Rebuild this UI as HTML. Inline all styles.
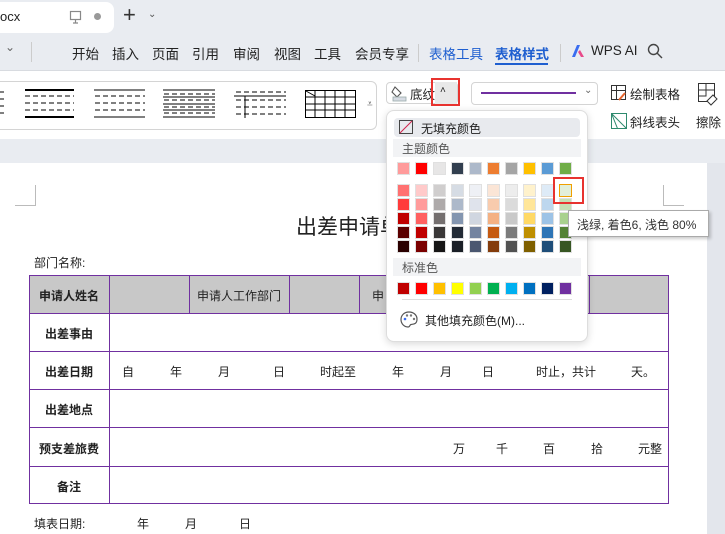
<!DOCTYPE html>
<html><head><meta charset="utf-8"><style>
*{box-sizing:border-box;margin:0;padding:0}
body{width:725px;height:534px;overflow:hidden;position:relative;background:#e9ecf1;font-family:"Liberation Sans","Noto Sans CJK SC",sans-serif;color:#222}
.a{position:absolute}
.t{position:absolute;white-space:nowrap;font-size:13px}
.menu .t{top:43px;font-size:13.5px}
.sw{position:absolute;width:13px;height:13px;border:1px solid #e0e0e0}
table{border-collapse:collapse}
</style></head><body>
<!-- tab bar -->
<div class="a" style="left:-10px;top:2px;width:124px;height:31px;background:#fff;border-radius:8px"></div>
<div class="t" style="left:0;top:9px;font-size:13px">ocx</div>
<svg class="a" style="left:69px;top:10px" width="14" height="14"><rect x="1.5" y="1.5" width="10" height="8" fill="none" stroke="#888" stroke-width="1.2"/><path d="M6.5 10v3M4 13h5" stroke="#888" stroke-width="1.2"/></svg>
<div class="a" style="left:94px;top:13px;width:7px;height:7px;border-radius:50%;background:#999"></div>
<div class="t" style="left:123px;top:2px;font-size:22px;color:#333">+</div>
<div class="t" style="left:148px;top:9px;font-size:10px;color:#555">⌄</div>
<!-- menu -->
<div class="menu">
<div class="t" style="left:5px;top:40px;color:#666;font-size:12px">⌄</div>
<div class="a" style="left:31px;top:42px;width:1px;height:20px;background:#ccc"></div>
<div class="t" style="left:72px">开始</div><div class="t" style="left:112px">插入</div><div class="t" style="left:152px">页面</div><div class="t" style="left:192px">引用</div><div class="t" style="left:233px">审阅</div><div class="t" style="left:274px">视图</div><div class="t" style="left:314px">工具</div><div class="t" style="left:355px">会员专享</div>
<div class="a" style="left:418px;top:44px;width:1px;height:18px;background:#ccc"></div>
<div class="t" style="left:429px;color:#1f5fd0">表格工具</div>
<div class="t" style="left:495px;color:#1f5fd0;font-weight:bold">表格样式</div>
<div class="a" style="left:495px;top:63px;width:53px;height:2px;background:#1f5fd0"></div>
<div class="a" style="left:560px;top:44px;width:1px;height:18px;background:#ccc"></div>
<svg class="a" style="left:571px;top:44px" width="14" height="14"><path d="M1 13L6 1h3L4 13z" fill="#3a6df0"/><path d="M7 8l3 5h3l-4-7z" fill="#e84a8a"/></svg>
<div class="t" style="left:591px;top:43px">WPS AI</div>
<svg class="a" style="left:647px;top:43px" width="16" height="16"><circle cx="6.5" cy="6.5" r="5" fill="none" stroke="#444" stroke-width="1.4"/><path d="M10 10l5 5" stroke="#444" stroke-width="1.4"/></svg>
</div>
<!-- ribbon -->
<div class="a" style="left:0;top:70px;width:725px;height:69px;background:#fff;border-top:1px solid #d8dbe0"></div>
<div class="a" style="left:-10px;top:81px;width:387px;height:49px;border:1px solid #d4d4d4;border-radius:6px;background:#fff"></div>
<svg class="a" style="left:0;top:88px" width="360" height="34">
<g stroke="#000" stroke-width="1" stroke-dasharray="5,3">
<line x1="0" y1="4" x2="4" y2="4"/><line x1="0" y1="11" x2="4" y2="11"/><line x1="0" y1="18" x2="4" y2="18"/><line x1="0" y1="25" x2="4" y2="25"/>
<line x1="25" y1="8" x2="74" y2="8"/><line x1="25" y1="15" x2="74" y2="15"/><line x1="25" y1="22" x2="74" y2="22"/>
<line x1="95" y1="8" x2="145" y2="8"/><line x1="95" y1="15" x2="145" y2="15"/><line x1="95" y1="22" x2="145" y2="22"/>
<line x1="164" y1="6" x2="215" y2="6"/><line x1="164" y1="12" x2="215" y2="12"/><line x1="164" y1="19" x2="215" y2="19"/><line x1="164" y1="25" x2="215" y2="25"/>
<line x1="236" y1="4" x2="286" y2="4"/><line x1="236" y1="12" x2="286" y2="12"/><line x1="236" y1="19" x2="286" y2="19"/><line x1="236" y1="26" x2="286" y2="26"/>
</g>
<g stroke="#000">
<line x1="25" y1="2" x2="74" y2="2" stroke-width="2"/><line x1="25" y1="29" x2="74" y2="29" stroke-width="2"/>
<line x1="94" y1="2" x2="145" y2="2"/><line x1="94" y1="29" x2="145" y2="29"/>
<line x1="163" y1="2" x2="215" y2="2"/><line x1="163" y1="9" x2="215" y2="9"/><line x1="163" y1="16" x2="215" y2="16"/><line x1="163" y1="22" x2="215" y2="22"/><line x1="163" y1="29" x2="215" y2="29"/>
<line x1="234" y1="8" x2="286" y2="8"/><line x1="245" y1="8" x2="245" y2="30"/>
<rect x="305.5" y="2.5" width="50" height="27" fill="none"/>
<line x1="305" y1="9" x2="356" y2="9"/><line x1="305" y1="16" x2="356" y2="16"/><line x1="305" y1="22" x2="356" y2="22"/>
<line x1="315" y1="2" x2="315" y2="30"/><line x1="325" y1="2" x2="325" y2="30"/><line x1="335" y1="2" x2="335" y2="30"/><line x1="345" y1="2" x2="345" y2="30"/>
<line x1="306" y1="3" x2="315" y2="8"/>
</g></svg>
<div class="t" style="left:367px;top:99px;font-size:10px;color:#555">⩡</div>
<div class="a" style="left:386px;top:82px;width:72px;height:22px;border:1px solid #d4d4d4;border-radius:4px"></div>
<svg class="a" style="left:391px;top:84px" width="18" height="18"><path d="M4 3l6 6-4 4-5-5z" fill="none" stroke="#555" stroke-width="1.1"/><rect x="2" y="13" width="13" height="4" fill="#d6dbe3" stroke="#9aa" stroke-width=".8"/></svg>
<div class="t" style="left:410px;top:84px;font-size:12.5px">底纹</div>
<div class="a" style="left:435px;top:82px;width:22px;height:22px;background:#e8e8e8"></div>
<div class="t" style="left:440px;top:85px;font-size:10px">˄</div>
<div class="a" style="left:431px;top:78px;width:29px;height:28px;border:2px solid #e8332f"></div>
<div class="a" style="left:471px;top:82px;width:127px;height:23px;border:1px solid #d4d4d4;border-radius:4px"></div>
<div class="a" style="left:481px;top:92px;width:95px;height:1.5px;background:#7030a0"></div>
<div class="t" style="left:584px;top:85px;font-size:10px;color:#666">⌄</div>
<svg class="a" style="left:610px;top:84px" width="18" height="18"><rect x="1.5" y="1.5" width="14" height="14" fill="none" stroke="#333"/><path d="M1.5 6.5h14M6.5 1.5v14" stroke="#333"/><path d="M9 16l6-7" stroke="#e8662f" stroke-width="2"/></svg>
<div class="t" style="left:630px;top:84px;font-size:12.5px">绘制表格</div>
<svg class="a" style="left:610px;top:112px" width="18" height="18"><rect x="1.5" y="1.5" width="15" height="15" fill="none" stroke="#2e8a6e"/><path d="M1.5 1.5l15 15M1.5 1.5l6 15" stroke="#2e8a6e"/></svg>
<div class="t" style="left:630px;top:112px;font-size:12.5px">斜线表头</div>
<svg class="a" style="left:697px;top:82px" width="22" height="24"><rect x="1.5" y="1.5" width="16" height="18" fill="none" stroke="#333"/><path d="M1.5 8h16M1.5 14h8M9 1.5v12" stroke="#333"/><path d="M10 19l6-6 4 4-6 6z" fill="#fff" stroke="#333"/></svg>
<div class="t" style="left:696px;top:112px;font-size:12.5px">擦除</div>
<!-- page -->
<div class="a" style="left:0;top:163px;width:707px;height:371px;background:#fff"></div>
<div class="a" style="left:15px;top:185px;width:21px;height:21px;border-right:1px solid #bbb;border-bottom:1px solid #bbb"></div>
<div class="a" style="left:663px;top:185px;width:21px;height:21px;border-left:1px solid #bbb;border-bottom:1px solid #bbb"></div>
<div class="t" style="left:296px;top:211px;font-size:21px;color:#222">出差申请单</div>
<div class="t" style="left:34px;top:254px;font-size:12px">部门名称:</div>
<div class="a" style="left:29px;top:275px;width:640px;height:229px;border:1px solid #7030a0"></div>
<div class="a" style="left:30px;top:276px;width:638px;height:37px;background:#c8c8c8"></div>
<div class="a" style="left:109px;top:275px;width:1px;height:229px;background:#7030a0"></div>
<div class="a" style="left:189px;top:275px;width:1px;height:38px;background:#7030a0"></div>
<div class="a" style="left:289px;top:275px;width:1px;height:38px;background:#7030a0"></div>
<div class="a" style="left:359px;top:275px;width:1px;height:38px;background:#7030a0"></div>
<div class="a" style="left:589px;top:275px;width:1px;height:38px;background:#7030a0"></div>
<div class="a" style="left:29px;top:313px;width:640px;height:1px;background:#7030a0"></div>
<div class="a" style="left:29px;top:351px;width:640px;height:1px;background:#7030a0"></div>
<div class="a" style="left:29px;top:389px;width:640px;height:1px;background:#7030a0"></div>
<div class="a" style="left:29px;top:427px;width:640px;height:1px;background:#7030a0"></div>
<div class="a" style="left:29px;top:466px;width:640px;height:1px;background:#7030a0"></div>
<div style="font-size:12px">
<div class="t" style="left:39px;top:287px;font-size:12px;font-weight:bold">申请人姓名</div>
<div class="t" style="left:197px;top:287px;font-size:12px">申请人工作部门</div>
<div class="t" style="left:372px;top:287px;font-size:12px">申</div>
<div class="t" style="left:45px;top:325px;font-size:12px;font-weight:bold">出差事由</div>
<div class="t" style="left:45px;top:363px;font-size:12px;font-weight:bold">出差日期</div>
<div class="t" style="left:45px;top:401px;font-size:12px;font-weight:bold">出差地点</div>
<div class="t" style="left:39px;top:440px;font-size:12px;font-weight:bold">预支差旅费</div>
<div class="t" style="left:57px;top:478px;font-size:12px;font-weight:bold">备注</div>
<div class="t" style="left:122px;top:363px;font-size:12px">自</div><div class="t" style="left:170px;top:363px;font-size:12px">年</div><div class="t" style="left:218px;top:363px;font-size:12px">月</div><div class="t" style="left:273px;top:363px;font-size:12px">日</div><div class="t" style="left:320px;top:363px;font-size:12px">时起至</div>
<div class="t" style="left:392px;top:363px;font-size:12px">年</div><div class="t" style="left:440px;top:363px;font-size:12px">月</div><div class="t" style="left:482px;top:363px;font-size:12px">日</div><div class="t" style="left:536px;top:363px;font-size:12px">时止，共计</div><div class="t" style="left:631px;top:363px;font-size:12px">天。</div>
<div class="t" style="left:453px;top:440px;font-size:12px">万</div><div class="t" style="left:496px;top:440px;font-size:12px">千</div><div class="t" style="left:543px;top:440px;font-size:12px">百</div><div class="t" style="left:591px;top:440px;font-size:12px">拾</div><div class="t" style="left:638px;top:440px;font-size:12px">元整</div>
<div class="t" style="left:34px;top:515px;font-size:12px">填表日期:</div><div class="t" style="left:137px;top:515px;font-size:12px">年</div><div class="t" style="left:185px;top:515px;font-size:12px">月</div><div class="t" style="left:239px;top:515px;font-size:12px">日</div>
</div>
<div class="a" style="left:707px;top:163px;width:18px;height:371px;background:#e3e6ec"></div>
<!-- popup -->
<div class="a" style="left:386px;top:110px;width:202px;height:232px;background:#fff;border:1px solid #ddd;border-radius:8px;box-shadow:0 2px 8px rgba(0,0,0,.15)"></div>
<div class="a" style="left:394px;top:118px;width:186px;height:19px;background:#e8eaee;border-radius:4px"></div>
<svg class="a" style="left:399px;top:120px" width="14" height="14"><rect x=".5" y=".5" width="13" height="13" fill="none" stroke="#444"/><path d="M1 13L13 1" stroke="#d0204a"/></svg>
<div class="t" style="left:421px;top:120px;font-size:12px">无填充颜色</div>
<div class="a" style="left:393px;top:139px;width:188px;height:18px;background:#f2f3f5"></div>
<div class="t" style="left:402px;top:140px;font-size:12px;color:#555">主题颜色</div>
<div class="a" style="left:393px;top:258px;width:188px;height:18px;background:#f2f3f5"></div>
<div class="t" style="left:402px;top:259px;font-size:12px;color:#555">标准色</div>
<div class="a" style="left:402px;top:299px;width:170px;height:1px;background:#ddd"></div>
<svg class="a" style="left:400px;top:311px" width="18" height="17"><path d="M9 1C4 1 1 4.5 1 8.5S4 16 8 16c2 0 1.5-2 3-2.5S17 14 17 8C17 4 13.5 1 9 1z" fill="none" stroke="#555" stroke-width="1.2"/><circle cx="5" cy="8" r="1.3" fill="#3a6df0"/><circle cx="7" cy="4.5" r="1.2" fill="#777"/><circle cx="11" cy="4.5" r="1.2" fill="#777"/><circle cx="14" cy="8" r="1.2" fill="#777"/></svg>
<div class="t" style="left:425px;top:312px;font-size:12px">其他填充颜色(M)...</div>
<div id="sw"></div>
<div class="a" style="left:568px;top:210px;width:141px;height:27px;background:#fff;border:1px solid #aaa;box-shadow:2px 2px 3px rgba(0,0,0,.2)"></div>
<div class="t" style="left:577px;top:216px;font-size:12px;color:#333">浅绿, 着色6, 浅色 80%</div>
<div class="a" style="left:553px;top:177px;width:31px;height:27px;border:2px solid #e8332f"></div>
<script>
var top1=["#ff9b9b","#ff0000","#e7e6e6","#323f4f","#adb9ca","#ed7d31","#a5a5a5","#ffc000","#5b9bd5","#70ad47"];
var sh=[["#ff7171","#ff3b3b","#c00000","#5c0000","#2a0000"],["#ffcaca","#ff9b9b","#ff6161","#c00000","#7a0000"],["#d0cece","#aeaaaa","#757070","#3a3838","#171616"],["#d6dce4","#adb9ca","#8496b0","#222a35","#1a1f26"],["#eef0f5","#dfe3ec","#d0d6e0","#7484a0","#4b5770"],["#fbe5d6","#f8cbad","#f4b183","#c55a11","#843c0c"],["#ededed","#dbdbdb","#c9c9c9","#7b7b7b","#525252"],["#fff2cc","#ffe699","#ffd966","#bf8f00","#7f6000"],["#deebf7","#bdd7ee","#9dc3e6","#2e75b6","#1f4e79"],["#e2efda","#c6e0b4","#a9d18e","#548235","#375623"]];
var std=["#c00000","#ff0000","#ffc000","#ffff00","#92d050","#00b050","#00b0f0","#0070c0","#002060","#7030a0"];
var h="";
for(var i=0;i<10;i++){var x=397+i*18;
h+='<div class="sw" style="left:'+x+'px;top:162px;background:'+top1[i]+'"></div>';
for(var j=0;j<5;j++)h+='<div class="sw" style="left:'+x+'px;top:'+(184+j*14)+'px;background:'+sh[i][j]+'"></div>';
h+='<div class="sw" style="left:'+x+'px;top:282px;background:'+std[i]+'"></div>';}
h+='<div class="sw" style="left:559px;top:184px;background:#e2efda;border:1.5px solid #f0a000"></div>';
document.getElementById("sw").innerHTML=h;
</script>
</body></html>
